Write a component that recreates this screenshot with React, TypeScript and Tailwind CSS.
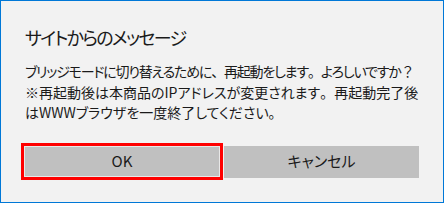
import React from 'react';

const P: React.FC<{ children: React.ReactNode }> = ({ children }) => (
  <span className="[font-feature-settings:normal]">{children}</span>
);

const App: React.FC = () => {
  return (
    <div className="w-[444px] h-[203px] border border-[#0078d7] bg-[#f2f2f2] text-[#1a1a1a] font-['Noto_Sans_CJK_JP',sans-serif] [font-feature-settings:'palt'] flex flex-col">
      <div className="pl-[24px] pt-[24px]">
        <h1 className="text-[18px] leading-[24px] font-normal tracking-[-1.7px]">サイトからのメッセージ</h1>
        <p className="mt-[12px] text-[14px] leading-[20.5px] whitespace-nowrap">
          <span className="tracking-[-1.2px]">
            ブリッジモードに切り替えるために<P>、</P>再起動をします<P>。</P>よろしいですか<P>？</P>
          </span>
          <br />
          ※再起動後は本商品のIPアドレスが変更されます<P>。</P>再起動完了後
          <br />
          はWWWブラウザを一度終了してください<P>。</P>
        </p>
      </div>
      <div className="flex pl-[23px] mt-[23px]">
        <button className="w-[196px] h-[31px] bg-[#c0c0c0] text-[15px] outline-[3px] outline-solid outline-[#ff0000] border border-[#e8e8e8]">
          OK
        </button>
        <button className="w-[195px] h-[32px] ml-[4px] bg-[#c0c0c0] text-[15px]">
          キャンセル
        </button>
      </div>
    </div>
  );
};

export default App;
